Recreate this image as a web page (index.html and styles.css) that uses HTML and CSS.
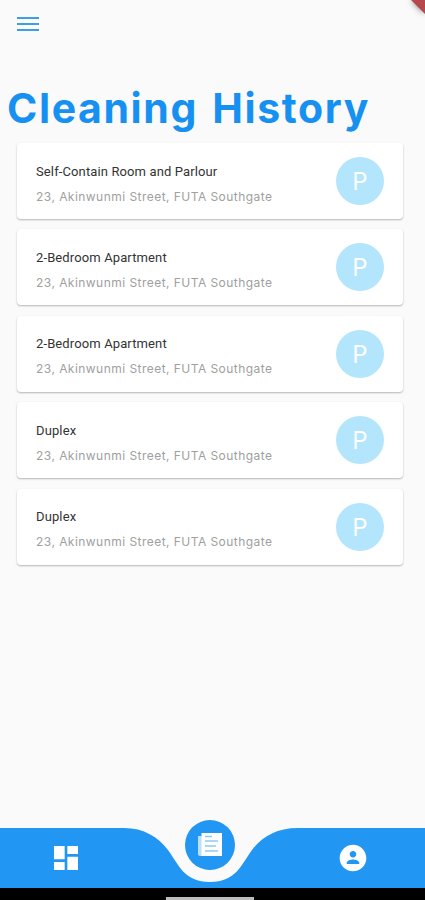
FILE: index.html
```html
<!DOCTYPE html>
<html lang="en">
<head>
    <meta charset="UTF-8">
    <meta name="viewport" content="width=device-width, initial-scale=1.0">
    <title>Cleaning History</title>
    <link rel="stylesheet" href="styles.css">
</head>
<body>
    <svg class="ribbon" width="25" height="25" viewBox="0 0 25 25">
        <path d="M11 0H25V14Z" fill="#b5484d"/>
    </svg>
    <header>
        <button class="menu-button" aria-label="Menu">
            <span></span>
            <span></span>
            <span></span>
        </button>
    </header>
    <main>
        <h1>Cleaning History</h1>
        <div class="list">
            <div class="card">
                <div class="info">
                    <h2>Self-Contain Room and Parlour</h2>
                    <p>23, Akinwunmi Street, FUTA Southgate</p>
                </div>
                <div class="avatar">P</div>
            </div>
            <div class="card">
                <div class="info">
                    <h2>2-Bedroom Apartment</h2>
                    <p>23, Akinwunmi Street, FUTA Southgate</p>
                </div>
                <div class="avatar">P</div>
            </div>
            <div class="card">
                <div class="info">
                    <h2>2-Bedroom Apartment</h2>
                    <p>23, Akinwunmi Street, FUTA Southgate</p>
                </div>
                <div class="avatar">P</div>
            </div>
            <div class="card">
                <div class="info">
                    <h2>Duplex</h2>
                    <p>23, Akinwunmi Street, FUTA Southgate</p>
                </div>
                <div class="avatar">P</div>
            </div>
            <div class="card">
                <div class="info">
                    <h2>Duplex</h2>
                    <p>23, Akinwunmi Street, FUTA Southgate</p>
                </div>
                <div class="avatar">P</div>
            </div>
        </div>
    </main>

    <nav class="bottom-nav">
        <svg class="nav-shape" viewBox="0 0 425 60">
            <path d="M0 0H124C144 0 158 9 168 22C179 37 184 54 210 54C236 54 241 37 252 22C262 9 276 0 298 0H425V60H0Z" fill="#2196f3"/>
        </svg>
        <a class="nav-item">
            <svg width="32" height="32" viewBox="0 0 24 24" fill="#fff">
                <path d="M3 13h8V3H3v10zm0 8h8v-6H3v6zm10 0h8V11h-8v10zm0-18v6h8V3h-8z"/>
            </svg>
        </a>
        <a class="nav-item active">
            <svg width="24" height="24" viewBox="0 0 24 24">
                <path d="M0 3h4v20H2q-2 0-2-2z" fill="#bbdefb"/>
                <path d="M3.500 0H24v23H3.500z" fill="#fff"/>
                <path d="M7 3.500h7M7 8h13M7 13h11M7 18h13" stroke="#90c9f8" stroke-width="1.600"/>
            </svg>
        </a>
        <a class="nav-item">
            <svg width="32" height="32" viewBox="0 0 24 24" fill="#fff">
                <path d="M12 2C6.480 2 2 6.480 2 12s4.480 10 10 10 10-4.480 10-10S17.520 2 12 2zm0 4.700c1.400 0 2.500 1.100 2.500 2.500s-1.100 2.500-2.500 2.500-2.500-1.100-2.500-2.500 1.100-2.500 2.500-2.500zm-4.700 9.800v-.8c0-1.600 3.100-2.500 4.700-2.500s4.700.9 4.700 2.500v.8z"/>
            </svg>
        </a>
    </nav>
    <footer>
        <div class="handle"></div>
    </footer>
</body>
</html>
```
FILE: styles.css
```css
body {
    font-family: Roboto, sans-serif;
    margin: 0;
    height: 900px;
    display: flex;
    flex-direction: column;
    background-color: #fafafa;
    position: relative;
    overflow: hidden;
}
/* corner banner */
.ribbon {
    position: absolute;
    top: 0;
    right: 0;
    filter: drop-shadow(0 0 3px rgba(0, 0, 0, 0.5));
}
header {
    height: 48px;
    padding: 0 17px;
    display: flex;
    align-items: center;
}
.menu-button {
    display: flex;
    flex-direction: column;
    gap: 4px;
    padding: 0;
    border: none;
    background: none;
}
.menu-button span {
    width: 22px;
    height: 2px;
    background-color: #3f9fe5;
}
main {
    flex: 1;
}
h1 {
    margin: 35px 0 0 7px;
    font-family: Inter, sans-serif;
    font-size: 41px;
    font-weight: 700;
    line-height: 50px;
    letter-spacing: 1.6px;
    word-spacing: 3px;
    white-space: nowrap;
    color: #1691f2;
}
.list {
    display: flex;
    flex-direction: column;
    gap: 10.4px;
    padding: 10px 22px 0 17px;
}
.card {
    display: flex;
    justify-content: space-between;
    align-items: center;
    height: 76px;
    padding: 0 19px;
    box-sizing: border-box;
    background-color: #fff;
    border-radius: 4px;
    box-shadow: 0 1px 2px rgba(0, 0, 0, 0.28);
}
.info {
    padding-top: 6px;
}
.info h2 {
    margin: 0 0 7px;
    font-size: 13px;
    font-weight: 400;
    line-height: 18px;
    letter-spacing: 0.12px;
    color: #333;
}
.info p {
    margin: 0;
    font-family: Inter, sans-serif;
    font-size: 12px;
    line-height: 18px;
    letter-spacing: 0.46px;
    color: #a0a0a0;
}
.avatar {
    width: 48px;
    height: 48px;
    border-radius: 50%;
    background-color: #b3e5fc;
    color: #fff;
    font-family: Inter, sans-serif;
    font-size: 24px;
    font-weight: 400;
    line-height: 49px;
    text-align: center;
}
.bottom-nav {
    position: relative;
    display: flex;
    justify-content: space-between;
    align-items: center;
    height: 60px;
    padding: 0 56px 0 50px;
}
.nav-shape {
    position: absolute;
    left: 0;
    top: 0;
    width: 425px;
    height: 60px;
}
.nav-item {
    position: relative;
    display: flex;
    align-items: center;
    justify-content: center;
}
.nav-item.active {
    top: -13px;
    width: 50px;
    height: 50px;
    border-radius: 50%;
    background-color: #2196f3;
}
footer {
    display: flex;
    justify-content: center;
    align-items: flex-end;
    height: 12px;
    padding-right: 5px;
    background-color: #000;
}
.handle {
    width: 88px;
    height: 3px;
    background-color: #bdbdbd;
}
```
